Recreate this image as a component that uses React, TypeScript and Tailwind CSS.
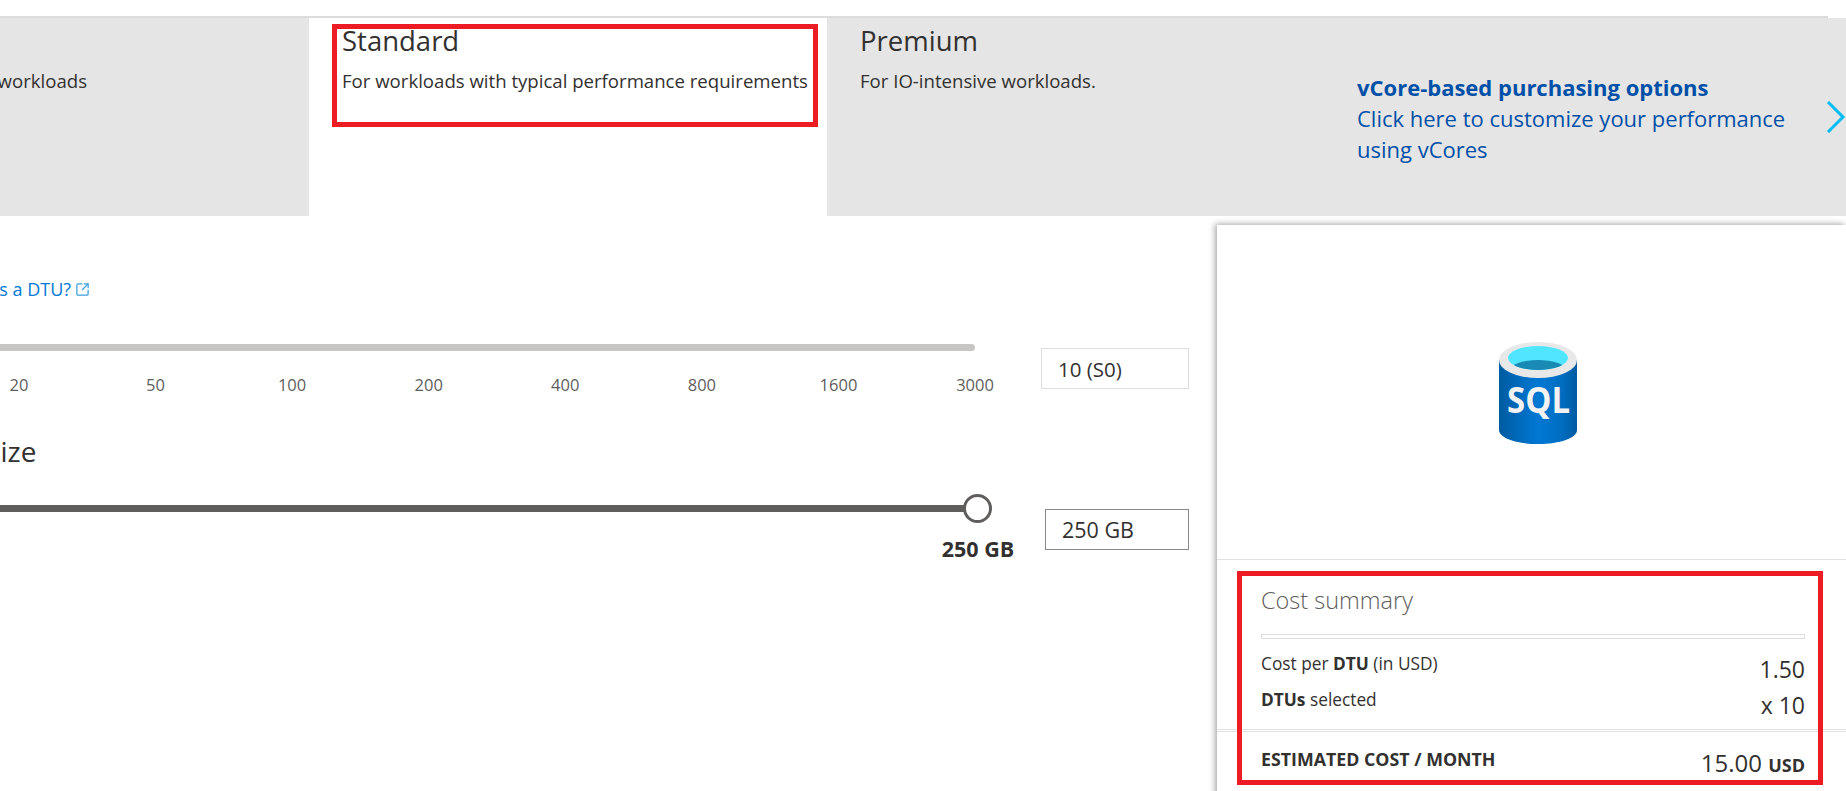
import { SquareArrowOutUpRight } from 'lucide-react'

const TICKS = ['10', '20', '50', '100', '200', '400', '800', '1600', '3000']

// ─── SQL logo ─────────────────────────────────────────────────────────────────

function SqlIcon() {
  return (
    <svg width="78" height="102" viewBox="0 0 78 102">
      <defs>
        <linearGradient id="sqlBody" x1="0" x2="1" y1="0" y2="0">
          <stop offset="0" stopColor="#005ba1" />
          <stop offset="0.5" stopColor="#0078d4" />
          <stop offset="0.78" stopColor="#006fc3" />
          <stop offset="1" stopColor="#005ba1" />
        </linearGradient>
        <clipPath id="sqlInner">
          <ellipse cx="39" cy="16" rx="30" ry="12" />
        </clipPath>
      </defs>
      <path d="M0 18V88C0 96 17 102 39 102S78 96 78 88V18Z" fill="url(#sqlBody)" />
      <ellipse cx="39" cy="18" rx="39" ry="18" fill="#e8e8e8" />
      <ellipse cx="39" cy="16" rx="30" ry="12" fill="#50e6ff" />
      <ellipse cx="39" cy="27" rx="27" ry="9" fill="#198ab3" clipPath="url(#sqlInner)" />
      <text
        x="39.5"
        y="71"
        textAnchor="middle"
        fontFamily="'Open Sans', sans-serif"
        fontWeight="700"
        fontSize="36"
        textLength="63"
        lengthAdjust="spacingAndGlyphs"
        fill="#f2f2f2"
      >
        SQL
      </text>
    </svg>
  )
}

// ─── Tabs ─────────────────────────────────────────────────────────────────────

function TierTabs() {
  return (
    <div className="flex h-[198px] bg-[#e5e5e5] text-[#323130]">
      <div className="ml-[-200px] w-[509px] shrink-0 pr-[222px] pt-[7px] text-right">
        <p className="pl-[27px] text-left text-[27.5px] leading-[32px] font-medium">Basic</p>
        <p className="mt-[12px] text-[18.6px] leading-[24px] whitespace-nowrap">For less demanding workloads</p>
      </div>
      <div className="w-[518px] shrink-0 bg-white pl-[33px] pt-[7px]">
        <p className="text-[27.5px] leading-[32px] font-medium">Standard</p>
        <p className="mt-[12px] text-[18.6px] leading-[24px] whitespace-nowrap">
          For workloads with typical performance requirements
        </p>
      </div>
      <div className="w-[530px] shrink-0 pl-[33px] pt-[7px]">
        <p className="text-[27.5px] leading-[32px] font-medium">Premium</p>
        <p className="mt-[12px] text-[18.6px] leading-[24px]">For IO-intensive workloads.</p>
      </div>
      <div className="relative flex-1 pt-[54px] text-[22px] leading-[31px] text-[#0050a8]">
        <p className="font-bold">vCore-based purchasing options</p>
        <p>Click here to customize your performance</p>
        <p>using vCores</p>
        <svg className="absolute right-0 top-[83px]" width="20" height="32" viewBox="0 0 20 32" fill="none">
          <path d="M2 1L17 16L2 31" stroke="#00bcf2" strokeWidth="3" />
        </svg>
      </div>
    </div>
  )
}

// ─── Sliders ──────────────────────────────────────────────────────────────────

function Sliders() {
  return (
    <div className="ml-[-186px] w-[1403px] shrink-0 text-[#323130]">
      <p className="mt-[61px] pl-[132px] text-[18px] leading-[24px] text-[#0078d4]">
        What is a DTU?
        <SquareArrowOutUpRight className="ml-[4px] inline h-[15px] w-[15px] align-[-1px] text-[#3aa0dd]" />
      </p>

      <div className="mt-[43px] flex">
        <div className="w-[1161px] shrink-0">
          <div className="h-[7px] rounded-r-full bg-[#c8c6c4]" />
          <div className="mt-[22px] flex text-[16.5px] leading-[24px] text-[#605e5c]">
            {TICKS.map((tick) => (
              <span key={tick} className="w-[136.6px] shrink-0 text-center">
                {tick}
              </span>
            ))}
          </div>
        </div>
        <div className="ml-[66px] mt-[4px] h-[41px] w-[148px] shrink-0 border border-[#dddddd] pl-[16px] text-[20.5px] leading-[41px]">
          10 (S0)
        </div>
      </div>

      <p className="mt-[36px] pl-[41px] text-[28px] leading-[36px]">Data max size</p>

      <div className="mt-[35px] flex">
        <div className="relative w-[1151px] shrink-0">
          <div className="mt-[1px] h-[7px] bg-[#605e5c]" />
          <div className="absolute left-[1149px] top-[-10px] h-[29px] w-[29px] rounded-full border-[3px] border-[#605e5c] bg-white" />
          <p className="absolute left-[1100px] top-[31px] w-[128px] text-center text-[21.5px] leading-[28px] font-bold whitespace-nowrap">250 GB</p>
        </div>
        <div className="ml-[80px] mt-[5px] h-[41px] w-[144px] shrink-0 border border-[#8a8886] pl-[16px] text-[21.5px] leading-[39px]">
          250 GB
        </div>
      </div>
    </div>
  )
}

// ─── Cost panel ───────────────────────────────────────────────────────────────

function CostPanel() {
  return (
    <div className="mt-[9px] h-[600px] w-[629px] shrink-0 bg-white text-[#323130] shadow-[-2px_-1px_6px_rgba(0,0,0,0.35)]">
      <div className="flex h-[335px] justify-center border-b border-[#e1e1e1] pl-[13px] pt-[117px]">
        <SqlIcon />
      </div>
      <div className="pl-[44px] pr-[41px]">
        <p className="mt-[24px] text-[23.5px] leading-[32px] font-light text-[#605e5c]">Cost summary</p>
        <div className="mt-[18px] h-[5px] border border-[#dddddd]" />
        <div className="mt-[13px] flex justify-between">
          <p className="text-[17.3px] leading-[24px]">
            Cost per <span className="font-bold">DTU</span> (in USD)
          </p>
          <p className="mt-[4px] text-[23px] leading-[26px]">1.50</p>
        </div>
        <div className="mt-[6px] flex justify-between">
          <p className="text-[17.3px] leading-[24px]">
            <span className="font-bold">DTUs</span> selected
          </p>
          <p className="mt-[4px] text-[23px] leading-[26px]">x 10</p>
        </div>
      </div>
      <div className="mt-[11px] h-[3px] border-y border-[#dfe2e5]" />
      <div className="flex justify-between pl-[44px] pr-[41px] pt-[15px]">
        <p className="text-[17.8px] leading-[24px] font-bold whitespace-nowrap">ESTIMATED COST / MONTH</p>
        <p className="mt-[2px] text-[24px] leading-[28px] whitespace-nowrap">
          15.00 <span className="text-[18px] font-bold">USD</span>
        </p>
      </div>
    </div>
  )
}

// ─── Page ─────────────────────────────────────────────────────────────────────

export default function App() {
  return (
    <div className="relative h-[791px] w-[1846px] overflow-hidden bg-white font-['Open_Sans',sans-serif]">
      <div className="h-[16px]" />
      <div className="h-[2px] w-[1828px] bg-[#dcdcdc]" />
      <TierTabs />
      <div className="flex">
        <Sliders />
        <CostPanel />
      </div>
      <div className="absolute left-[332px] top-[24px] h-[103px] w-[486px] border-[5px] border-[#ed1c24]" />
      <div className="absolute left-[1237px] top-[571px] h-[214px] w-[586px] border-[5px] border-[#ed1c24]" />
    </div>
  )
}
